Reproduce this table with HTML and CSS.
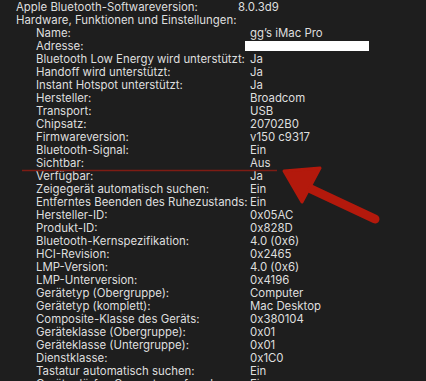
FILE: index.html
```html
<!DOCTYPE html>
<html>
<head>
<meta charset="UTF-8">
<title>Bluetooth</title>
<link rel="stylesheet" href="styles.css">
</head>
<body>
<div class="report">
	<div class="row top"><span class="key">Apple Bluetooth-Softwareversion:</span><span class="val">8.0.3d9</span></div>
	<div class="row top"><span class="key">Hardware, Funktionen und Einstellungen:</span></div>
	<div class="row"><span class="key">Name:</span><span class="val">gg’s iMac Pro</span></div>
	<div class="row"><span class="key">Adresse:</span><span class="val"><span class="hidden"></span></span></div>
	<div class="row"><span class="key">Bluetooth Low Energy wird unterstützt:</span><span class="val">Ja</span></div>
	<div class="row"><span class="key">Handoff wird unterstützt:</span><span class="val">Ja</span></div>
	<div class="row"><span class="key">Instant Hotspot unterstützt:</span><span class="val">Ja</span></div>
	<div class="row"><span class="key">Hersteller:</span><span class="val">Broadcom</span></div>
	<div class="row"><span class="key">Transport:</span><span class="val">USB</span></div>
	<div class="row"><span class="key">Chipsatz:</span><span class="val">20702B0</span></div>
	<div class="row"><span class="key">Firmwareversion:</span><span class="val">v150 c9317</span></div>
	<div class="row"><span class="key">Bluetooth-Signal:</span><span class="val">Ein</span></div>
	<div class="row"><span class="key">Sichtbar:</span><span class="val">Aus</span></div>
	<div class="row"><span class="key">Verfügbar:</span><span class="val">Ja</span></div>
	<div class="row"><span class="key">Zeigegerät automatisch suchen:</span><span class="val">Ein</span></div>
	<div class="row"><span class="key">Entferntes Beenden des Ruhezustands:</span><span class="val">Ein</span></div>
	<div class="row"><span class="key">Hersteller-ID:</span><span class="val">0x05AC</span></div>
	<div class="row"><span class="key">Produkt-ID:</span><span class="val">0x828D</span></div>
	<div class="row"><span class="key">Bluetooth-Kernspezifikation:</span><span class="val">4.0 (0x6)</span></div>
	<div class="row"><span class="key">HCI-Revision:</span><span class="val">0x2465</span></div>
	<div class="row"><span class="key">LMP-Version:</span><span class="val">4.0 (0x6)</span></div>
	<div class="row"><span class="key">LMP-Unterversion:</span><span class="val">0x4196</span></div>
	<div class="row"><span class="key">Gerätetyp (Obergruppe):</span><span class="val">Computer</span></div>
	<div class="row"><span class="key">Gerätetyp (komplett):</span><span class="val">Mac Desktop</span></div>
	<div class="row"><span class="key">Composite-Klasse des Geräts:</span><span class="val">0x380104</span></div>
	<div class="row"><span class="key">Geräteklasse (Obergruppe):</span><span class="val">0x01</span></div>
	<div class="row"><span class="key">Geräteklasse (Untergruppe):</span><span class="val">0x01</span></div>
	<div class="row"><span class="key">Dienstklasse:</span><span class="val">0x1C0</span></div>
	<div class="row"><span class="key">Tastatur automatisch suchen:</span><span class="val">Ein</span></div>
	<div class="row"><span class="key">Geräte dürfen Computer aufwecken:</span><span class="val">Ein</span></div>
</div>

<!-- hand-drawn marker over the list -->
<svg class="marker" width="426" height="381" viewBox="0 0 426 381">
	<line x1="22" y1="170.5" x2="277" y2="170.5" stroke="#7e1c14" stroke-width="1.6"/>
	<line x1="311" y1="189" x2="375" y2="219" stroke="#b3190c" stroke-width="9" stroke-linecap="round"/>
	<polygon points="284,171 320,168 302,202" fill="#b3190c" stroke="#b3190c" stroke-width="3" stroke-linejoin="round"/>
</svg>
</body>
</html>
```

FILE: styles.css
```css
body
{
	margin: 0;
	background-color: #1e1e1e;
	color: #dedede;
	font-family: Inter, "Liberation Sans", sans-serif;
	font-size: 11.4px;
	overflow: hidden;
}

.report
{
	padding-top: 1px;
}

.row
{
	display: flex;
	height: 13px;
	line-height: 13px;
	padding-left: 36px;
	white-space: nowrap;
}

.row .key
{
	width: 214px;
	flex: none;
}

.top
{
	padding-left: 16px;
}

.top .key
{
	width: 222px;
}

.hidden
{
	display: inline-block;
	width: 124px;
	height: 10px;
	margin-left: -5px;
	margin-top: 1px;
	vertical-align: top;
	background-color: #ffffff;
}

.marker
{
	position: absolute;
	left: 0;
	top: 0;
}
```
